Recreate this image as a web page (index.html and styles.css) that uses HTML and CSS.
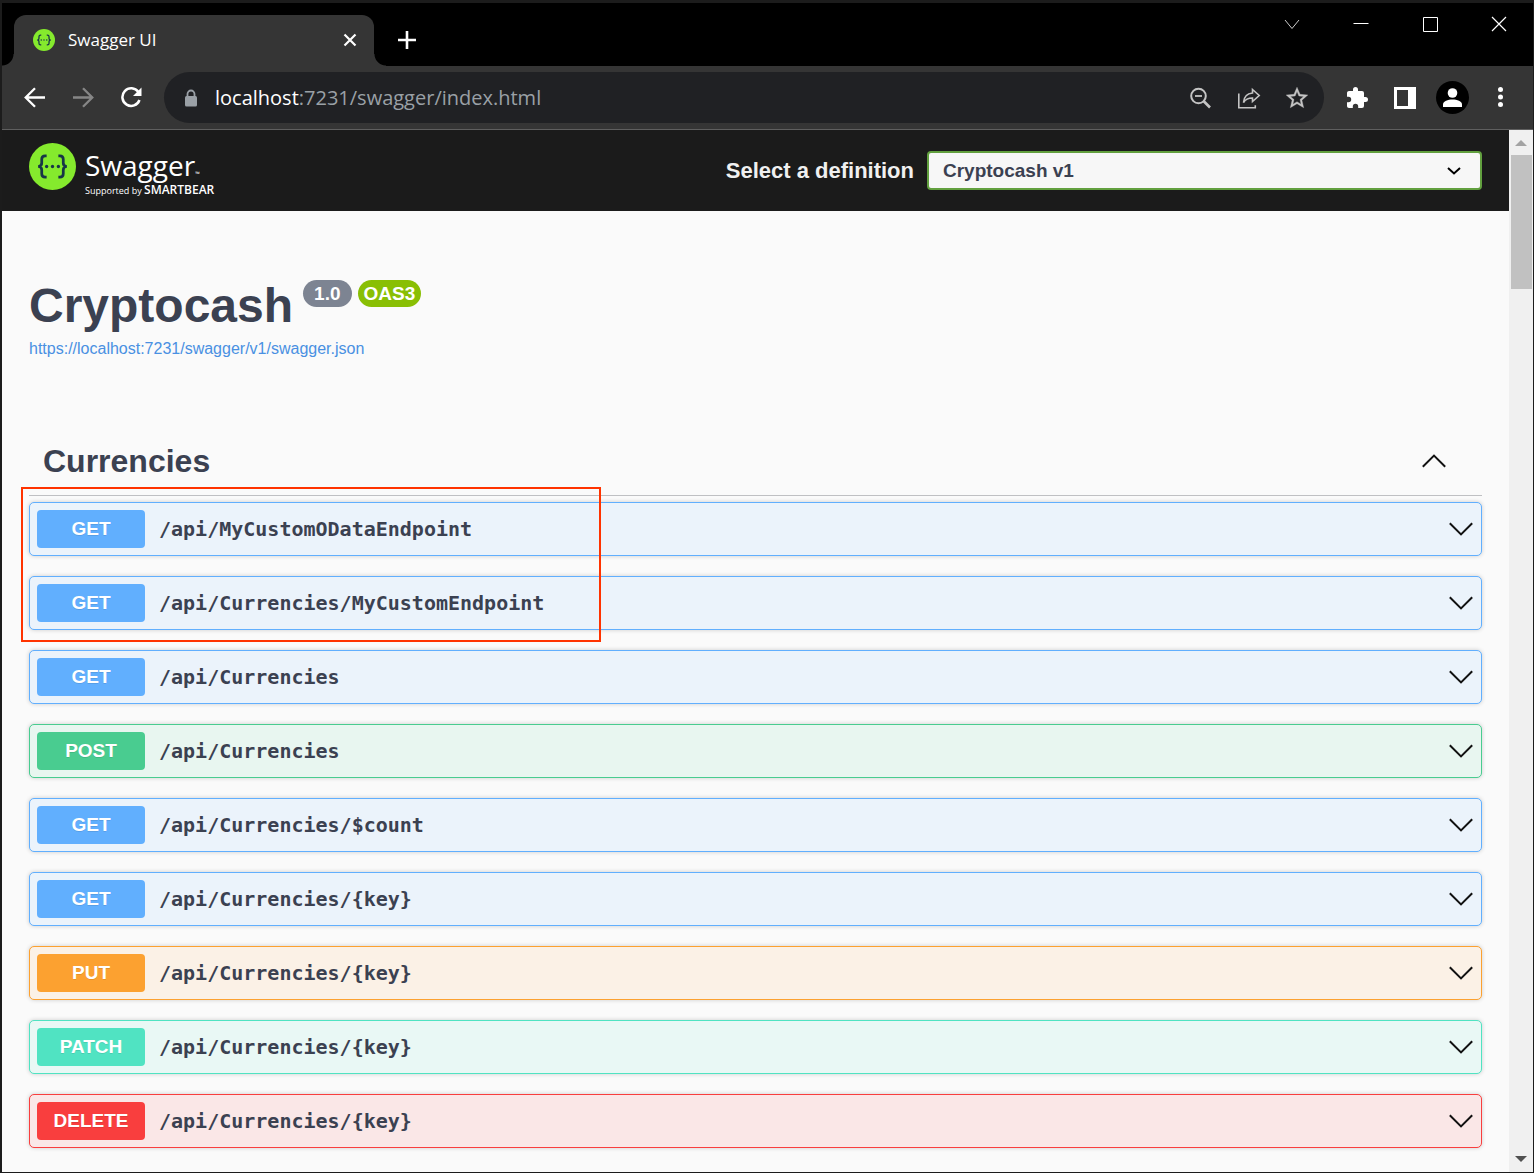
FILE: index.html
```html
<!DOCTYPE html>
<html lang="en">
<head>
<meta charset="utf-8">
<meta name="viewport" content="width=device-width, initial-scale=1">
<title>Swagger UI</title>
<link rel="stylesheet" href="styles.css">
</head>
<body>
<svg class="defs" aria-hidden="true">
  <symbol id="chevron" viewBox="0 0 24 14"><path d="M.8 1.2 12 12.4 23.2 1.2" fill="none" stroke="currentColor" stroke-width="2"/></symbol>
  <symbol id="braces" viewBox="0 0 48 48">
    <circle cx="24" cy="24" r="24" fill="#85ea2d"/>
    <path d="M18 13.200h-1.500q-3.500 0-3.500 3.500v3.800q0 3.500-3.700 3.500 3.700 0 3.700 3.500v3.800q0 3.500 3.500 3.500h1.500M30 13.200h1.500q3.500 0 3.500 3.500v3.800q0 3.500 3.700 3.500-3.700 0-3.700 3.500v3.800q0 3.500-3.500 3.500h-1.500" fill="none" stroke="#173647" stroke-width="2.800"/>
    <circle cx="18" cy="24" r="1.700" fill="#173647"/><circle cx="24" cy="24" r="1.700" fill="#173647"/><circle cx="30" cy="24" r="1.700" fill="#173647"/>
  </symbol>
</svg>
<div class="browser">
  <header class="tab-strip">
    <div class="tab">
      <svg class="favicon"><use href="#braces"/></svg>
      <span class="tab-title">Swagger UI</span>
      <button class="tab-close" aria-label="Close tab"><svg width="14" height="14" viewBox="0 0 14 14"><path d="M1.500 1.500l11 11M12.500 1.500l-11 11" stroke="#fff" stroke-width="2.200"/></svg></button>
    </div>
    <button class="new-tab" aria-label="New tab"><svg width="18" height="18" viewBox="0 0 18 18"><path d="M9 0v18M0 9h18" stroke="#fff" stroke-width="2.600"/></svg></button>
    <div class="window-controls">
      <button aria-label="Search tabs"><svg width="16" height="16" viewBox="0 0 16 16"><path d="M1 4l7 8.500L15 4" fill="none" stroke="#ccc"/></svg></button>
      <button aria-label="Minimize"><svg width="16" height="16" viewBox="0 0 16 16"><path d="M.5 7.500h15" stroke="#fff"/></svg></button>
      <button aria-label="Maximize"><svg width="16" height="16" viewBox="0 0 16 16"><path d="M1.500 1.500h14v14h-14z" fill="none" stroke="#fff"/></svg></button>
      <button aria-label="Close"><svg width="16" height="16" viewBox="0 0 16 16"><path d="M1 1l14 14M15 1L1 15" stroke="#fff" stroke-width="1.200"/></svg></button>
    </div>
  </header>

  <div class="toolbar">
    <button class="tool" aria-label="Back"><svg width="22" height="22" viewBox="0 0 22 22"><path d="M21 10.500H2.500M11 1.200L1.700 10.500l9.300 9.300" fill="none" stroke="#fff" stroke-width="2.300"/></svg></button>
    <button class="tool" aria-label="Forward"><svg width="22" height="22" viewBox="0 0 22 22"><path d="M1 10.500h18.500M11 1.200l9.300 9.300-9.300 9.300" fill="none" stroke="#868686" stroke-width="2.300"/></svg></button>
    <button class="tool" aria-label="Reload"><svg width="22" height="22" viewBox="0 0 22 22"><path d="M18.400 5A8.800 8.800 0 1 0 19.500 13" fill="none" stroke="#fff" stroke-width="2.500"/><path d="M21.500.5V9H13z" fill="#fff"/></svg></button>
    <div class="omnibox">
      <svg class="lock" width="14" height="18" viewBox="0 0 14 18"><path d="M3.500 8V5a3.500 3.500 0 0 1 7 0v3" fill="none" stroke="#9aa0a6" stroke-width="1.800"/><rect x="1" y="7" width="12" height="10.500" rx="1.500" fill="#9aa0a6"/></svg>
      <div class="url" role="textbox" contenteditable="true" spellcheck="false" aria-label="Address"><span class="url-host">localhost</span>:7231/swagger/index.html</div>
      <button class="tool" aria-label="Zoom"><svg width="22" height="22" viewBox="0 0 22 22"><circle cx="8.500" cy="9" r="7.300" fill="none" stroke="#c4c4c4" stroke-width="2"/><path d="M5 9h7" stroke="#c4c4c4" stroke-width="1.800"/><path d="M13.500 14l6.500 6.500" stroke="#c4c4c4" stroke-width="2.600"/></svg></button>
      <button class="tool" aria-label="Share"><svg width="24" height="24" viewBox="0 0 24 24" fill="none" stroke="#c4c4c4" stroke-width="1.600"><path d="M1.800 7.500v14.200h16.500v-2.500"/><path d="M15.500 3.500l6.700 6-6.700 6v-3.500c-4.500 0-7.200 1.400-9 4.500.4-5.500 3.500-9 9-9.500z"/></svg></button>
      <button class="tool" aria-label="Bookmark"><svg width="26" height="26" viewBox="0 0 24 24"><path d="M22 9.240l-7.190-.62L12 2 9.190 8.630 2 9.240l5.460 4.730L5.820 21 12 17.270 18.180 21l-1.630-7.030L22 9.240zM12 15.400l-3.760 2.270 1-4.280-3.320-2.880 4.380-.38L12 6.100l1.710 4.040 4.380.38-3.320 2.880 1 4.280L12 15.400z" fill="#c4c4c4" stroke="#c4c4c4" stroke-width=".3"/></svg></button>
    </div>
    <button class="tool" aria-label="Extensions"><svg width="24" height="24" viewBox="0 0 24 24"><path d="M20.500 11H19V7a2 2 0 0 0-2-2h-4V3.500a2.500 2.500 0 0 0-5 0V5H4c-1.100 0-1.990.9-1.990 2v3.800H3.500a2.700 2.700 0 0 1 0 5.400H2V20c0 1.100.9 2 2 2h3.800v-1.500a2.700 2.700 0 0 1 5.400 0V22H17a2 2 0 0 0 2-2v-4h1.500a2.500 2.500 0 0 0 0-5z" fill="#fff"/></svg></button>
    <button class="tool" aria-label="Side panel"><svg width="22" height="22" viewBox="0 0 22 22"><path d="M0 0h22v22H0zM3 3v16h11V3z" fill="#fff" fill-rule="evenodd"/></svg></button>
    <button class="tool" aria-label="Profile"><svg width="34" height="34" viewBox="0 0 34 34"><circle cx="16.500" cy="16.500" r="16.500" fill="#000"/><circle cx="16.500" cy="12" r="4.800" fill="#fff"/><path d="M7 26v-2.500c0-3.300 5-5 9.500-5s9.500 1.700 9.500 5V26z" fill="#fff"/></svg></button>
    <button class="tool" aria-label="Menu"><svg width="6" height="22" viewBox="0 0 6 22" fill="#fff"><circle cx="2.500" cy="2.500" r="2.500"/><circle cx="2.500" cy="10" r="2.500"/><circle cx="2.500" cy="17.500" r="2.500"/></svg></button>
  </div>

  <div class="viewport">
    <div class="page">
      <div class="topbar">
        <a class="logo" href="#" aria-label="Swagger, supported by SmartBear">
          <svg class="logo-mark"><use href="#braces"/></svg>
          <span class="logo-text">
            <span class="logo-name">Swagger<span class="logo-tm">™</span></span>
            <span class="logo-by">Supported by <b>SMARTBEAR</b></span>
          </span>
        </a>
        <label class="definition-label" for="definition">Select a definition</label>
        <div class="definition">
          <select id="definition"><option>Cryptocash v1</option></select>
          <svg width="14" height="8" viewBox="0 0 14 8"><path d="M1 1l6 5.500L13 1" fill="none" stroke="#000" stroke-width="2"/></svg>
        </div>
      </div>

      <main>
        <div class="title-row">
          <h1>Cryptocash</h1>
          <span class="badge badge-version">1.0</span>
          <span class="badge badge-oas">OAS3</span>
        </div>
        <a class="spec-link" href="#">https://localhost:7231/swagger/v1/swagger.json</a>

        <section>
          <div class="tag-header">
            <h2>Currencies</h2>
            <button class="collapse" aria-label="Collapse Currencies"><svg class="chevron up"><use href="#chevron"/></svg></button>
          </div>
          <div class="operations">
            <button class="op get"><span class="method">GET</span><span class="path">/api/MyCustomODataEndpoint</span><svg class="chevron"><use href="#chevron"/></svg></button>
            <button class="op get"><span class="method">GET</span><span class="path">/api/Currencies/MyCustomEndpoint</span><svg class="chevron"><use href="#chevron"/></svg></button>
            <button class="op get"><span class="method">GET</span><span class="path">/api/Currencies</span><svg class="chevron"><use href="#chevron"/></svg></button>
            <button class="op post"><span class="method">POST</span><span class="path">/api/Currencies</span><svg class="chevron"><use href="#chevron"/></svg></button>
            <button class="op get"><span class="method">GET</span><span class="path">/api/Currencies/$count</span><svg class="chevron"><use href="#chevron"/></svg></button>
            <button class="op get"><span class="method">GET</span><span class="path">/api/Currencies/{key}</span><svg class="chevron"><use href="#chevron"/></svg></button>
            <button class="op put"><span class="method">PUT</span><span class="path">/api/Currencies/{key}</span><svg class="chevron"><use href="#chevron"/></svg></button>
            <button class="op patch"><span class="method">PATCH</span><span class="path">/api/Currencies/{key}</span><svg class="chevron"><use href="#chevron"/></svg></button>
            <button class="op delete"><span class="method">DELETE</span><span class="path">/api/Currencies/{key}</span><svg class="chevron"><use href="#chevron"/></svg></button>
            <div class="highlight"></div>
          </div>
        </section>
      </main>
    </div>
    <div class="scrollbar">
      <svg width="12" height="6" viewBox="0 0 12 6"><path d="M0 6l6-6 6 6z" fill="#a3a3a3"/></svg>
      <div class="thumb"></div>
      <svg class="scroll-down" width="12" height="6" viewBox="0 0 12 6"><path d="M0 0l6 6 6-6z" fill="#505050"/></svg>
    </div>
  </div>
</div>
</body>
</html>
```

FILE: styles.css
```css
* { box-sizing: border-box; }

body {
  margin: 0;
  font-family: "Liberation Sans", Arial, sans-serif;
  color: #3b4151;
}

button {
  margin: 0;
  padding: 0;
  border: 0;
  background: none;
  font: inherit;
  color: inherit;
  cursor: pointer;
}

svg { display: block; flex: none; }
.defs { position: absolute; width: 0; height: 0; }

.browser {
  display: flex;
  flex-direction: column;
  min-height: 100vh;
  border: solid #1c1c1c;
  border-width: 3px 1px 2px 2px;
}

/* Tab strip */
.tab-strip {
  display: flex;
  align-items: flex-start;
  height: 63px;
  padding-left: 12px;
  background: #000;
}

.tab {
  position: relative;
  display: flex;
  align-items: center;
  width: 360px;
  height: 51px;
  margin-top: 12px;
  padding: 0 17px 2px 18px;
  border-radius: 12px 12px 0 0;
  background: #353535;
  color: #fff;
  font-family: "Open Sans", "Noto Sans", sans-serif;
}

.tab::before,
.tab::after {
  content: "";
  position: absolute;
  bottom: 0;
  width: 12px;
  height: 12px;
}
.tab::before { right: 100%; background: radial-gradient(circle at 0 0, #000 11px, #353535 12px); }
.tab::after { left: 100%; background: radial-gradient(circle at 100% 0, #000 11px, #353535 12px); }

.favicon { width: 24px; height: 24px; padding: 1px; }
.tab-title { flex: 1; padding-left: 12px; font-size: 17px; line-height: 24px; }
.new-tab { margin: 28px 0 0 24px; }

.window-controls { display: flex; margin-left: auto; }
.window-controls button {
  display: grid;
  place-items: center;
  width: 69px;
  height: 42px;
}

/* Toolbar */
.toolbar {
  display: flex;
  align-items: center;
  height: 64px;
  padding: 0 8px 0 9px;
  border-bottom: 1px solid #5f5f5f;
  background: #353535;
}

.tool {
  display: grid;
  place-items: center;
  flex: none;
  width: 48px;
  height: 48px;
}

.omnibox {
  display: flex;
  flex: 1;
  align-items: center;
  height: 51px;
  margin: 0 9px;
  padding: 0 3px 0 20px;
  border-radius: 26px;
  background: #202124;
}

.url {
  flex: 1;
  min-width: 0;
  padding-left: 17px;
  overflow: hidden;
  white-space: nowrap;
  font-family: "Open Sans", "Noto Sans", sans-serif;
  font-size: 20px;
  line-height: 30px;
  color: #9aa0a6;
}
.url-host { color: #fff; }

/* Page and scrollbar */
.viewport { display: flex; flex: 1; }
.page { flex: 1; min-width: 0; background: #fafafa; }

.scrollbar {
  display: flex;
  flex-direction: column;
  align-items: center;
  width: 24px;
  padding: 10px 0;
  background: #f0f0f0;
}
.thumb { width: 21px; height: 134px; margin-top: 9px; background: #c1c1c1; }
.scroll-down { margin-top: auto; }

/* Swagger top bar */
.topbar {
  display: flex;
  align-items: center;
  height: 81px;
  padding: 0 27px;
  background: #1b1b1b;
}

.logo {
  display: flex;
  flex: 1;
  gap: 9px;
  color: #fff;
  font-family: "Open Sans", sans-serif;
  text-decoration: none;
}
.logo-mark { width: 47px; height: 47px; }
.logo-text { display: flex; flex-direction: column; padding-top: 3px; }
.logo-name { font-size: 28px; line-height: 38px; }
.logo-tm { font-size: 6px; line-height: 1; }
.logo-by { font-size: 9px; line-height: 14px; white-space: nowrap; }
.logo-by b { font-size: 12px; font-weight: 600; line-height: 1; }

.definition-label {
  padding-right: 13px;
  color: #f0f0f0;
  font-size: 22px;
  font-weight: 700;
}

.definition {
  display: grid;
  align-items: center;
  flex: 0 1 555px;
}
.definition > * { grid-area: 1 / 1; }
.definition svg { justify-self: end; margin-right: 21px; pointer-events: none; }
.definition select {
  width: 100%;
  height: 39px;
  padding: 0 40px 0 14px;
  border: 2px solid #62a03f;
  border-radius: 4px;
  background: #f7f7f7;
  color: #3b4151;
  font: 700 19px "Liberation Sans", Arial, sans-serif;
  appearance: none;
}

/* API information */
main { padding: 67px 27px 24px; }

.title-row { display: flex; align-items: flex-start; gap: 6px; }
h1 { margin: 0 4px 0 0; font-size: 48px; line-height: 56px; }

.badge {
  margin-top: 2px;
  border-radius: 14px;
  color: #fff;
  font-size: 19px;
  font-weight: 700;
  line-height: 27px;
}
.badge-version { padding: 0 11px; background: #7d8492; }
.badge-oas { padding: 0 6px; background: #89bf04; }

.spec-link {
  display: block;
  margin-top: 4px;
  color: #4990e2;
  font-size: 16px;
  line-height: 22px;
  text-decoration: none;
}

/* Operations */
.tag-header {
  display: flex;
  align-items: center;
  justify-content: space-between;
  height: 70px;
  margin-top: 66px;
  padding: 0 36px 0 14px;
  border-bottom: 1px solid #bfc0c3;
}
h2 { margin: 0; font-size: 32px; line-height: 40px; }

.chevron { width: 24px; height: 14px; color: #111; }
.chevron.up { transform: rotate(180deg); }

.operations {
  position: relative;
  display: flex;
  flex-direction: column;
  gap: 20px;
  margin-top: 6px;
}

.op {
  display: flex;
  align-items: center;
  height: 54px;
  padding: 0 8px 0 7px;
  border: 1px solid var(--color);
  border-radius: 5px;
  background: var(--tint);
  box-shadow: 0 0 4px rgba(0, 0, 0, .19);
  text-align: left;
}

.method {
  width: 108px;
  border-radius: 4px;
  background: var(--color);
  color: #fff;
  font-size: 19px;
  font-weight: 700;
  line-height: 38px;
  text-align: center;
  text-shadow: 0 1px 0 rgba(0, 0, 0, .1);
}

.path {
  flex: 1;
  padding-left: 14px;
  font-family: Consolas, "DejaVu Sans Mono", monospace;
  font-size: 20px;
  font-weight: 700;
}

.get { --color: #61affe; --tint: #ebf3fb; }
.post { --color: #49cc90; --tint: #e8f6f0; }
.put { --color: #fca130; --tint: #fbf1e6; }
.patch { --color: #50e3c2; --tint: #e9f8f5; }
.delete { --color: #f93e3e; --tint: #fae7e7; }

/* Callout round the custom endpoints */
.highlight {
  position: absolute;
  top: -15px;
  left: -8px;
  width: 580px;
  height: 155px;
  border: 2px solid #ff3300;
  pointer-events: none;
}
```
